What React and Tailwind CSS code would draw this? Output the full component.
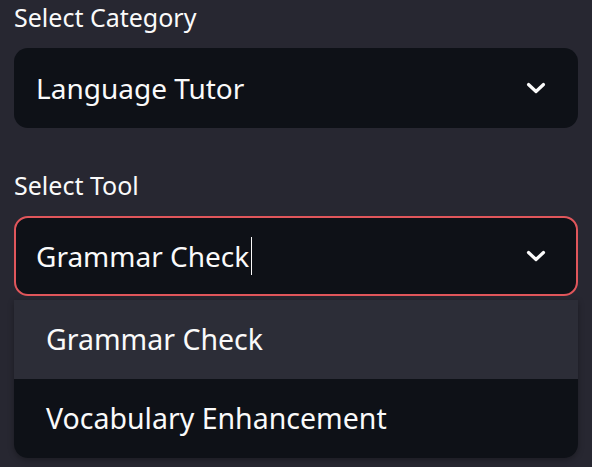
function Chevron() {
  return (
    <svg width="20" height="12" viewBox="0 0 20 12" fill="none">
      <path d="M2.5 2.5 L10 9.5 L17.5 2.5" stroke="#fafafa" strokeWidth="3.2" strokeLinecap="round" strokeLinejoin="round" />
    </svg>
  );
}

function SelectBox({ value, focused, caret }) {
  return (
    <div
      className={`h-[80px] rounded-[14px] bg-[#0e1117] flex items-center justify-between pl-[20px] pr-[30px] ${
        focused ? "border-2 border-[#e0565b]" : "border-2 border-transparent"
      }`}
    >
      <span className="text-[28px] text-[#fafafa] flex items-center">
        {value}
        {caret && <span className="inline-block w-px h-[38px] bg-[#fafafa] ml-[2px]" />}
      </span>
      <Chevron />
    </div>
  );
}

export default function App() {
  const options = ["Grammar Check", "Vocabulary Enhancement"];

  return (
    <div
      className="w-[592px] h-[467px] bg-[#272731] px-[14px] pt-[1px] overflow-hidden"
      style={{ fontFamily: '"Noto Sans", "Open Sans", sans-serif' }}
    >
      {/* Category */}
      <div className="text-[25px] text-[#fafafa] leading-[32px]">Select Category</div>
      <div className="mt-[15px]">
        <SelectBox value="Language Tutor" />
      </div>

      {/* Tool */}
      <div className="text-[25px] text-[#fafafa] leading-[32px] mt-[41px]">Select Tool</div>
      <div className="mt-[15px]">
        <SelectBox value="Grammar Check" focused caret />
      </div>

      {/* Dropdown menu */}
      <div className="mt-[4px] rounded-b-[14px] overflow-hidden shadow-[0_2px_6px_rgba(0,0,0,0.3)]">
        {options.map((opt, i) => (
          <div
            key={opt}
            className={`h-[79px] flex items-center pl-[32px] text-[28.5px] text-[#fafafa] ${
              i === 0 ? "bg-[#2c2d37]" : "bg-[#0e1117]"
            }`}
          >
            {opt}
          </div>
        ))}
      </div>
    </div>
  );
}
